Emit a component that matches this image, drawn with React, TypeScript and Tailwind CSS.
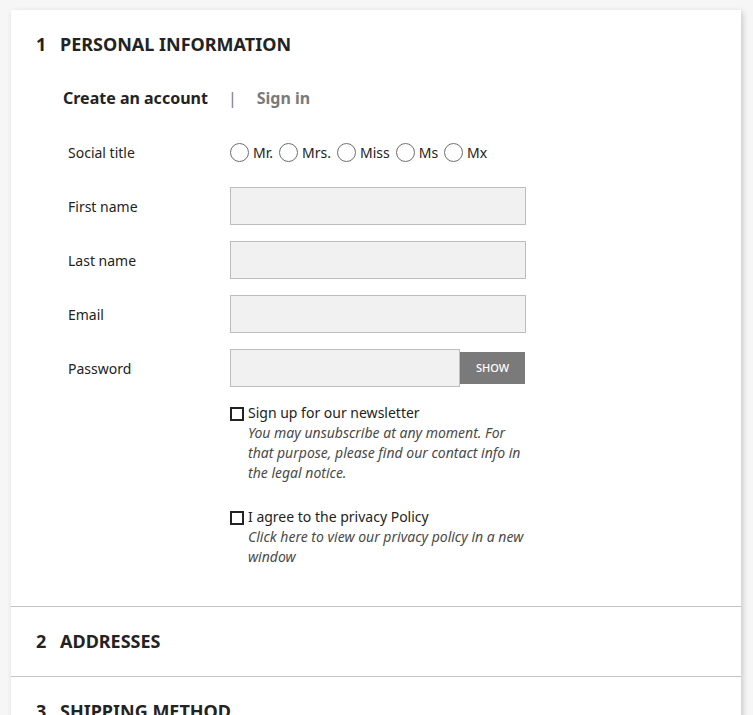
import React from 'react';

const titles = ['Mr.', 'Mrs.', 'Miss', 'Ms', 'Mx'];

function StepHeading({ num, title }: { num: number; title: string }) {
  return (
    <h2 className="flex h-5 items-center text-[18px] font-bold uppercase leading-5 text-[#232323]">
      <span className="w-[24px]">{num}</span>
      <span>{title}</span>
    </h2>
  );
}

function FieldRow({ label, children }: { label: string; children: React.ReactNode }) {
  return (
    <div className="flex h-[38px] items-center">
      <label className="w-[162px] text-[14px] text-[#232323]">{label}</label>
      <div className="flex h-full items-center">{children}</div>
    </div>
  );
}

function TextInput({ width = 'w-[296px]' }: { width?: string }) {
  return <div className={`h-[38px] ${width} border border-[#bdbdbd] bg-[#f1f1f1]`} />;
}

function CheckRow({ label, note }: { label: string; note: string }) {
  return (
    <div className="flex">
      <div className="mt-[4px] h-[14px] w-[14px] shrink-0 border-2 border-[#232323]" />
      <div className="ml-[4px] w-[278px] text-[14px] leading-5 text-[#232323]">
        <div>{label}</div>
        <div className="italic text-[#4a4a4a]">{note}</div>
      </div>
    </div>
  );
}

export default function App() {
  return (
    <div
      className="min-h-[715px] bg-[#f6f6f6] pt-[10px] pl-[11px]"
      style={{ fontFamily: '"Noto Sans", "Open Sans", sans-serif' }}
    >
      <div className="w-[730px] bg-white shadow-[2px_2px_6px_0_rgba(0,0,0,0.18)]">
        <section className="border-b border-[#c4c4c4] px-[25px] pt-[24px] pb-[39px]">
          <StepHeading num={1} title="Personal Information" />

          <div className="mt-[32px] flex h-6 items-center pl-[27px] text-[16px] font-bold">
            <span className="text-[#232323]">Create an account</span>
            <span className="ml-[20px] font-normal text-[#7a7a7a]">|</span>
            <span className="ml-[20px] text-[#7a7a7a]">Sign in</span>
          </div>

          <div className="mt-[23px] flex flex-col gap-4 pl-[32px]">
            <FieldRow label="Social title">
              <div className="flex items-center gap-[6px]">
                {titles.map((t) => (
                  <label key={t} className="flex items-center gap-[4px] text-[14px] text-[#232323]">
                    <span className="h-[19px] w-[19px] rounded-full border-[1.5px] border-[#6e6e6e]" />
                    {t}
                  </label>
                ))}
              </div>
            </FieldRow>
            <FieldRow label="First name">
              <TextInput />
            </FieldRow>
            <FieldRow label="Last name">
              <TextInput />
            </FieldRow>
            <FieldRow label="Email">
              <TextInput />
            </FieldRow>
            <FieldRow label="Password">
              <TextInput width="w-[230px]" />
              <button className="h-[32px] w-[65px] bg-[#7a7a7a] text-[11px] font-medium text-white">
                SHOW
              </button>
            </FieldRow>

            <div className="flex flex-col gap-6 pl-[162px]">
              <CheckRow
                label="Sign up for our newsletter"
                note="You may unsubscribe at any moment. For that purpose, please find our contact info in the legal notice."
              />
              <CheckRow
                label="I agree to the privacy Policy"
                note="Click here to view our privacy policy in a new window"
              />
            </div>
          </div>
        </section>

        <section className="border-b border-[#c4c4c4] px-[25px] pt-[24px] pb-[25px]">
          <StepHeading num={2} title="Addresses" />
        </section>

        <section className="px-[25px] pt-[24px] pb-[25px]">
          <StepHeading num={3} title="Shipping Method" />
        </section>
      </div>
    </div>
  );
}
